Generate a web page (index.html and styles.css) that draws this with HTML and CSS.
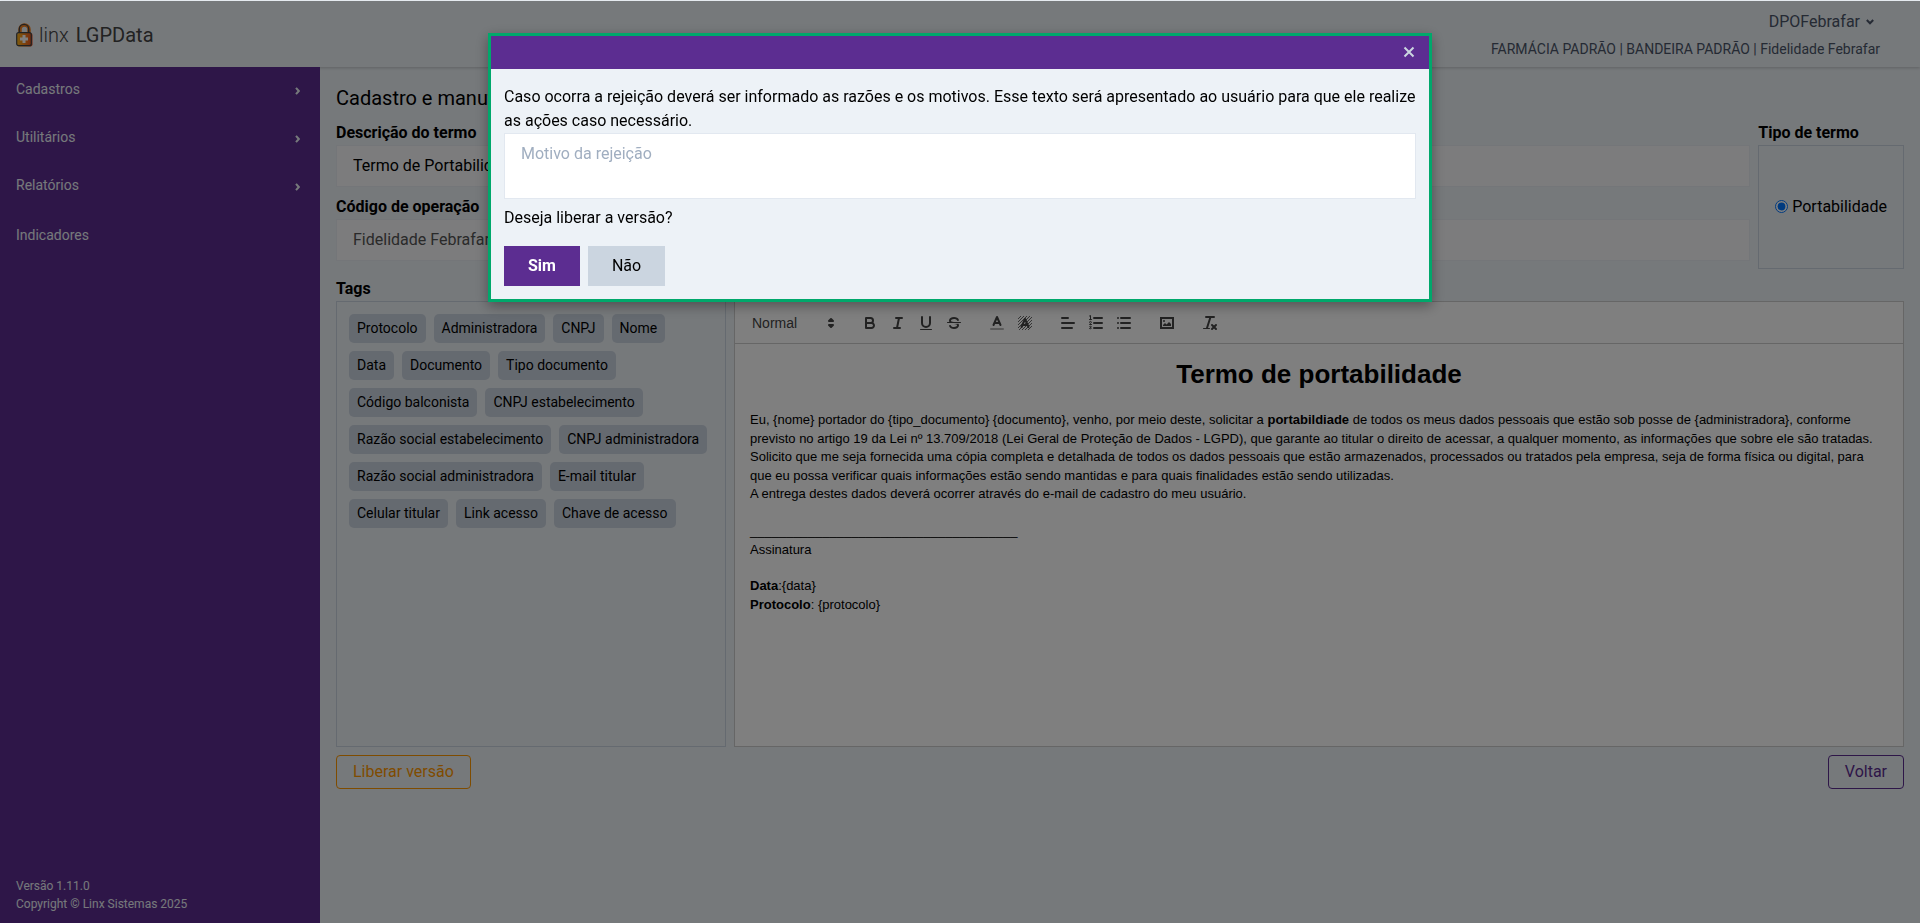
FILE: index.html
```html
<!DOCTYPE html>
<html lang="pt-BR">
<head>
<meta charset="utf-8">
<meta name="viewport" content="width=device-width, initial-scale=1">
<title>linx LGPData</title>
<link rel="stylesheet" href="styles.css">
</head>
<body>
<div class="app">
  <header class="topbar">
    <div class="logo">
      <svg class="logo-lock" viewBox="0 0 17 24" aria-hidden="true">
        <defs><linearGradient id="lock" x1="0" x2="1"><stop offset="0" stop-color="#ffb81c"/><stop offset="1" stop-color="#f0501e"/></linearGradient></defs>
        <path d="M4 10V6.500a4.500 4.500 0 0 1 9 0V10" fill="none" stroke="#f58220" stroke-width="3.500"/>
        <path d="M3.300 10V6a4.700 4.700 0 0 1 9.400 0v4" fill="none" stroke="#444" stroke-width="1.300"/>
        <rect x="1" y="10" width="15.500" height="13.500" rx="2" fill="url(#lock)"/>
        <rect x=".700" y="9.700" width="14.600" height="13" rx="2" fill="none" stroke="#444" stroke-width="1.200"/>
        <path d="M8 12v8M4 16h8" stroke="#fff" stroke-width="3"/>
      </svg>
      <span class="logo-light">linx</span><span class="logo-strong">LGPData</span>
    </div>
    <div class="account">
      <button class="user" type="button">DPOFebrafar
        <svg viewBox="0 0 8 6" class="user-chevron" aria-hidden="true"><path d="M.8 1 4 4.300 7.200 1"/></svg>
      </button>
      <div class="context">FARMÁCIA PADRÃO | BANDEIRA PADRÃO | Fidelidade Febrafar</div>
    </div>
  </header>
  <div class="shell">
    <aside class="sidebar">
      <nav class="menu">
        <a href="#" class="menu-item">Cadastros <svg viewBox="0 0 5 8" class="menu-chevron" aria-hidden="true"><path d="M1 .8 3.800 4 1 7.200"/></svg></a>
        <a href="#" class="menu-item">Utilitários <svg viewBox="0 0 5 8" class="menu-chevron" aria-hidden="true"><path d="M1 .8 3.800 4 1 7.200"/></svg></a>
        <a href="#" class="menu-item">Relatórios <svg viewBox="0 0 5 8" class="menu-chevron" aria-hidden="true"><path d="M1 .8 3.800 4 1 7.200"/></svg></a>
        <a href="#" class="menu-item menu-item-last">Indicadores</a>
      </nav>
      <footer class="version">Versão 1.11.0<br>Copyright © Linx Sistemas 2025</footer>
    </aside>
    <main class="content">
      <h1 class="page-title">Cadastro e manutenção de termos</h1>
      <div class="form-top">
        <div class="fields">
          <div class="field">
            <label class="label" for="descricao">Descrição do termo</label>
            <input class="input" id="descricao" type="text" value="Termo de Portabilidade">
          </div>
          <div class="field">
            <label class="label" for="codigo">Código de operação</label>
            <input class="input" id="codigo" type="text" value="Fidelidade Febrafar" disabled>
          </div>
        </div>
        <div class="type" role="group" aria-labelledby="tipo">
          <div class="label" id="tipo">Tipo de termo</div>
          <div class="type-box">
            <label class="radio"><input type="radio" name="tipo" checked>Portabilidade</label>
          </div>
        </div>
      </div>
      <h2 class="label tags-label">Tags</h2>
      <div class="work">
        <div class="tags">
          <button class="tag" type="button">Protocolo</button>
          <button class="tag" type="button">Administradora</button>
          <button class="tag" type="button">CNPJ</button>
          <button class="tag" type="button">Nome</button>
          <button class="tag" type="button">Data</button>
          <button class="tag" type="button">Documento</button>
          <button class="tag" type="button">Tipo documento</button>
          <button class="tag" type="button">Código balconista</button>
          <button class="tag" type="button">CNPJ estabelecimento</button>
          <button class="tag" type="button">Razão social estabelecimento</button>
          <button class="tag" type="button">CNPJ administradora</button>
          <button class="tag" type="button">Razão social administradora</button>
          <button class="tag" type="button">E-mail titular</button>
          <button class="tag" type="button">Celular titular</button>
          <button class="tag" type="button">Link acesso</button>
          <button class="tag" type="button">Chave de acesso</button>
        </div>
        <div class="editor">
          <div class="toolbar">
            <div class="tools">
              <button class="picker" type="button">Normal
                <svg class="ico" viewBox="0 0 18 18"><polygon class="fs" points="7 11 9 13 11 11 7 11"/><polygon class="fs" points="7 7 9 5 11 7 7 7"/></svg>
              </button>
            </div>
            <div class="tools">
              <button class="tool" type="button" aria-label="Negrito"><svg class="ico" viewBox="0 0 18 18"><path d="M5,4H9.500A2.500,2.500,0,0,1,12,6.500v0A2.500,2.500,0,0,1,9.500,9H5A0,0,0,0,1,5,9V4A0,0,0,0,1,5,4Z"/><path d="M5,9h5.500A2.500,2.500,0,0,1,13,11.500v0A2.500,2.500,0,0,1,10.500,14H5a0,0,0,0,1,0,0V9A0,0,0,0,1,5,9Z"/></svg></button>
              <button class="tool" type="button" aria-label="Itálico"><svg class="ico" viewBox="0 0 18 18"><path d="M7 4h6M5 14h6M8 14l2-10"/></svg></button>
              <button class="tool" type="button" aria-label="Sublinhado"><svg class="ico" viewBox="0 0 18 18"><path d="M5,3V9a4.012,4.012,0,0,0,4,4H9a4.012,4.012,0,0,0,4-4V3"/><rect class="f" x="3" y="15" width="12" height="1" rx=".5"/></svg></button>
              <button class="tool" type="button" aria-label="Tachado"><svg class="ico" viewBox="0 0 18 18"><path class="thin" d="M15.500 8.500h-13"/><path class="f" d="M9.007,8C6.542,7.791,6,7.519,6,6.500,6,5.792,7.283,5,9,5c1.571,0,2.765.679,2.969,1.309a1,1,0,0,0,1.900-.617C13.356,4.106,11.354,3,9,3,6.200,3,4,4.538,4,6.500a3.200,3.200,0,0,0,.5,1.843Z"/><path class="f" d="M8.984,10C11.457,10.208,12,10.479,12,11.500c0,0.708-1.283,1.500-3,1.500-1.571,0-2.765-.679-2.969-1.309a1,1,0,1,0-1.900.617C4.644,13.894,6.646,15,9,15c2.800,0,5-1.538,5-3.500a3.200,3.200,0,0,0-.5-1.843Z"/></svg></button>
            </div>
            <div class="tools">
              <button class="tool" type="button" aria-label="Cor"><svg class="ico" viewBox="0 0 18 18"><path class="faint" d="M3 15h12"/><path d="M5.500 11 9 3l3.500 8M11.630 9H6.380"/></svg></button>
              <button class="tool" type="button" aria-label="Cor de fundo"><svg class="ico" viewBox="0 0 18 18"><path class="hatch" d="M2 5l3-3M2 8l6-6M2 11l9-9M2 14 14 2M3 16 16 3M6 16 16 6M9 16l7-7M12 16l4-4"/><path d="M5.500 13 9 5l3.500 8M11.630 11H6.380"/></svg></button>
            </div>
            <div class="tools">
              <button class="tool" type="button" aria-label="Alinhar"><svg class="ico" viewBox="0 0 18 18"><path d="M3 9h12M3 14h10M3 4h6"/></svg></button>
              <button class="tool" type="button" aria-label="Lista numerada"><svg class="ico" viewBox="0 0 18 18"><path d="M7 4h8M7 9h8M7 14h8"/><path class="thin" d="M2.500 5.500h2M3.500 5.500v-4l-1 .5M4.500 10.500h-2c0-.8 1.850-1.100 1.850-2.200a.9.900 0 0 0-1.850 0M2.500 14.600c.6.400 1.900.2 1.900-.4s-.9-.7-1.200-.7c.5 0 1.300-.2 1.100-.8s-1.300-.6-1.700-.2"/></svg></button>
              <button class="tool" type="button" aria-label="Lista"><svg class="ico" viewBox="0 0 18 18"><path d="M6 4h9M6 9h9M6 14h9M3 4h0M3 9h0M3 14h0"/></svg></button>
            </div>
            <div class="tools">
              <button class="tool" type="button" aria-label="Imagem"><svg class="ico" viewBox="0 0 18 18"><path class="square" d="M3 4h12v10H3z"/><circle class="f" cx="6" cy="7" r="1"/><path class="f" d="M5 12v-1l2-2 1.500 1.500L11 8l2 2v2z"/></svg></button>
            </div>
            <div class="tools">
              <button class="tool" type="button" aria-label="Limpar formatação"><svg class="ico" viewBox="0 0 18 18"><path d="M5 3h8M6 14 9.500 3M11 11l4 4M15 11l-4 4"/><rect class="f" x="2" y="14" width="7" height="1" rx=".5"/></svg></button>
            </div>
          </div>
          <div class="doc">
            <h2 class="doc-title">Termo de portabilidade</h2>
            <p><br></p>
            <p>Eu, {nome} portador do {tipo_documento} {documento}, venho, por meio deste, solicitar a <strong>portabildiade</strong> de todos os meus dados pessoais que estão sob posse de {administradora}, conforme previsto no artigo 19 da Lei nº 13.709/2018 (Lei Geral de Proteção de Dados - LGPD), que garante ao titular o direito de acessar, a qualquer momento, as informações que sobre ele são tratadas. Solicito que me seja fornecida uma cópia completa e detalhada de todos os dados pessoais que estão armazenados, processados ou tratados pela empresa, seja de forma física ou digital, para que eu possa verificar quais informações estão sendo mantidas e para quais finalidades estão sendo utilizadas.</p>
            <p>A entrega destes dados deverá ocorrer através do e-mail de cadastro do meu usuário.</p>
            <p><br></p>
            <p>_____________________________________</p>
            <p>Assinatura</p>
            <p><br></p>
            <p><strong>Data</strong>:{data}</p>
            <p><strong>Protocolo</strong>: {protocolo}</p>
          </div>
        </div>
      </div>
      <div class="actions">
        <button class="btn btn-warn" type="button">Liberar versão</button>
        <button class="btn btn-back" type="button">Voltar</button>
      </div>
    </main>
  </div>
</div>
<div class="overlay">
  <div class="modal" role="dialog" aria-modal="true" aria-labelledby="aviso">
    <div class="modal-head">
      <button class="close" type="button" aria-label="Fechar"><svg viewBox="0 0 12 12"><path d="M1.500 1.500l9 9M10.500 1.500l-9 9"/></svg></button>
    </div>
    <div class="modal-body">
      <label id="aviso" class="modal-text" for="motivo">Caso ocorra a rejeição deverá ser informado as razões e os motivos. Esse texto será apresentado ao usuário para que ele realize as ações caso necessário.</label>
      <textarea class="reason" id="motivo" rows="2" placeholder="Motivo da rejeição"></textarea>
      <p class="question">Deseja liberar a versão?</p>
      <div class="choices">
        <button class="choice choice-yes" type="button">Sim</button>
        <button class="choice" type="button">Não</button>
      </div>
    </div>
  </div>
</div>
</body>
</html>
```

FILE: styles.css
```css
* { box-sizing: border-box; }
body {
  margin: 0;
  background: #edf2f7;
  color: #000;
  font: 16px/24px Roboto, "Open Sans", sans-serif;
}
h1, h2, p { margin: 0; }
button, input, textarea { font: inherit; color: inherit; margin: 0; }
button { border: 0; background: none; padding: 0; cursor: pointer; }

.app { display: flex; flex-direction: column; min-height: 100vh; padding-top: 1px; }

.topbar {
  display: flex;
  justify-content: space-between;
  align-items: center;
  height: 66px;
  padding: 2px 40px 0 16px;
  box-shadow: 0 1px 3px rgba(0, 0, 0, .2);
}
.logo { display: flex; align-items: center; color: #444; font-size: 20px; }
.logo-lock { width: 17px; height: 24px; margin-right: 6px; }
.logo-light { font-weight: 300; margin-right: 7px; }
.logo-strong { font-weight: 400; }
.account { display: flex; flex-direction: column; align-items: flex-end; gap: 3px; color: #4a5568; }
.user { display: flex; align-items: center; gap: 6px; margin-right: 6px; line-height: 24px; }
.user-chevron { width: 8px; height: 6px; fill: none; stroke: currentColor; stroke-width: 2; }
.context { font-size: 14px; line-height: 24px; }

.shell { display: flex; flex: 1; }
.sidebar {
  position: relative;
  display: flex;
  flex-direction: column;
  justify-content: space-between;
  flex: 0 0 320px;
  background: #5c2d91;
  color: #edf2f7;
}
.menu { display: flex; flex-direction: column; }
.menu-item {
  display: flex;
  justify-content: space-between;
  align-items: center;
  padding: 10px 20px 14px 16px;
  color: inherit;
  font-size: 14px;
  text-decoration: none;
}
.menu-item-last { padding-top: 12px; }
.menu-chevron { width: 5px; height: 8px; margin-top: 4px; fill: none; stroke: currentColor; stroke-width: 2; }
.version { padding: 0 16px 10px; font-size: 12px; line-height: 18px; }

.content { flex: 1; min-width: 0; padding: 16px; }
.page-title { font-size: 20px; font-weight: 400; line-height: 30px; margin-bottom: 8px; }
.label { display: block; font-size: 16px; font-weight: 700; line-height: 24px; }
.form-top { display: flex; gap: 8px; }
.fields { flex: 1; display: flex; flex-direction: column; gap: 8px; }
.input {
  display: block;
  width: 100%;
  padding: 8px 16px;
  border: 1px solid #e8edf2;
  background: #f9f9fa;
}
.input:disabled { color: #545454; }
.type { display: flex; flex-direction: column; }
.type-box { flex: 1; display: flex; align-items: center; padding: 0 16px; border: 1px solid #cbd5e0; margin-bottom: -8px; }
.radio { display: flex; align-items: center; gap: 4px; }
.radio input { width: 13px; height: 13px; margin-bottom: 2px; accent-color: #0075ff; }
.tags-label { margin-top: 16px; }

.work { display: flex; gap: 8px; height: 446px; }
.tags {
  flex: 0 1 390px;
  display: flex;
  flex-wrap: wrap;
  align-content: flex-start;
  gap: 8px;
  padding: 12px;
  border: 1px solid #cbd5e0;
}
.tag { padding: 4px 8px; border-radius: 5px; background: #cbd5e0; font-size: 14px; line-height: 21px; }

.editor {
  flex: 1;
  min-width: 0;
  border: 1px solid #ccc;
  background: #fff;
  font: 13px/18px "Liberation Sans", Arial, sans-serif;
}
.toolbar { display: flex; gap: 15px; padding: 9px 8px 8px; border-bottom: 1px solid #ccc; color: #444; }
.tools { display: flex; }
.tool { width: 28px; height: 24px; padding: 3px 5px; }
.picker {
  display: flex;
  justify-content: space-between;
  align-items: center;
  width: 98px;
  height: 24px;
  padding: 0 1px 0 9px;
  font-size: 14px;
}
.ico { display: block; width: 18px; height: 18px; fill: none; stroke: #444; stroke-width: 2; stroke-linecap: round; stroke-linejoin: round; }
.ico .f { fill: #444; stroke: none; }
.ico .fs { fill: #444; }
.ico .thin { stroke-width: 1; }
.ico .square { stroke-linejoin: miter; }
.ico .faint { opacity: .4; }
.ico .hatch { stroke-width: 1; stroke-linecap: butt; opacity: .8; }
.doc { padding: 12px 15px; line-height: 1.42; }
.doc-title { font-size: 26px; text-align: center; line-height: 1.42; }

.actions { display: flex; justify-content: space-between; margin-top: 8px; }
.btn { padding: 4px 16px; border: 1px solid currentColor; border-radius: 4px; }
.btn-warn { color: #ff9800; }
.btn-back { color: #5c2d91; }

.overlay {
  position: fixed;
  inset: 1px 0 0;
  display: flex;
  justify-content: center;
  align-items: flex-start;
  padding-top: 32px;
  background: rgba(0, 0, 0, .5);
}
.modal {
  width: 944px;
  max-width: 100%;
  border: 3px solid #00a86b;
  background: #edf2f7;
  box-shadow: 0 4px 12px rgba(0, 0, 0, .35);
}
.modal-head { display: flex; justify-content: flex-end; align-items: center; height: 33px; padding: 0 14px 2px; background: #5c2d91; }
.close { color: #cbd5e0; }
.close svg { display: block; width: 12px; height: 12px; fill: none; stroke: currentColor; stroke-width: 2; }
.modal-body { padding: 16px 13px 13px; }
.modal-text { display: block; }
.reason { display: block; width: 100%; padding: 8px 16px; border: 1px solid #e2e8f0; background: #fff; resize: none; }
.reason::placeholder { color: #a0aec0; }
.question { margin: 7px 0 16px; }
.choices { display: flex; gap: 8px; }
.choice { padding: 8px 24px; background: #cbd5e0; }
.choice-yes { background: #5c2d91; color: #fff; font-weight: 700; }
```
